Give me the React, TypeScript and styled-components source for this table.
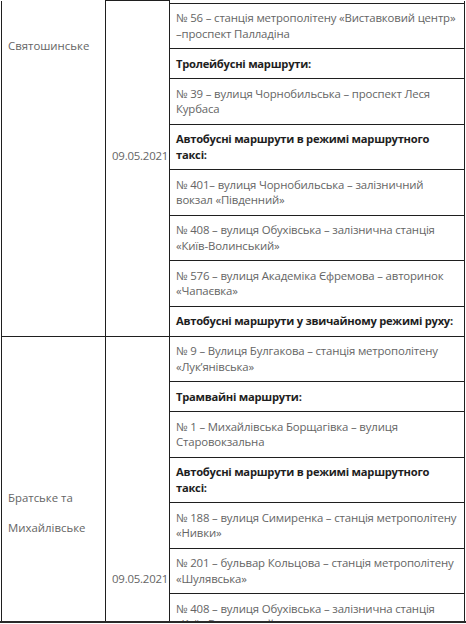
import React from "react";
import styled, { createGlobalStyle } from "styled-components";

const Global = createGlobalStyle`
  html, body { margin: 0; padding: 0; background: #fff; }
  body { overflow: hidden; }
`;

const Frame = styled.div`
  height: 621px;
  overflow: hidden;
  border-bottom: 2px solid #2a2a2a;
  background: #fff;
`;

const Table = styled.table`
  border-collapse: collapse;
  table-layout: fixed;
  width: 464px;
  margin-left: 1px;
  font-family: "Open Sans", "Noto Sans", sans-serif;
  font-size: 11.4px;
  line-height: 15.5px;
  color: #656565;
`;

const Cell = styled.td<{ $top?: number; $bold?: boolean }>`
  border: 1px solid #1f1f1f;
  padding: ${(p) => (p.$top !== undefined ? `${p.$top}px 6px 6px` : "6.75px 6px")};
  vertical-align: top;
  font-weight: ${(p) => (p.$bold ? 700 : 400)};
  font-size: ${(p) => (p.$bold ? "11.2px" : "11.4px")};
  letter-spacing: ${(p) => (p.$bold ? "-0.25px" : "-0.16px")};
  color: ${(p) => (p.$bold ? "#1e1e1e" : "#656565")};
`;

const TopCell = styled.td`
  border: 1px solid #1f1f1f;
  border-top: none;
  padding: 0;
  height: 2px;
`;

const SideCell = styled(Cell)`
  border-top: ${(p) => (p.$top !== undefined && p.$top < 40 ? "none" : "1px solid #1f1f1f")};
  letter-spacing: 0;
`;

const Line = styled.span`
  display: block;
  white-space: nowrap;
`;

const DateText = styled.span`
  white-space: nowrap;
  letter-spacing: -0.2px;
`;

const Para = styled.div<{ $gap?: number }>`
  & + & { margin-top: ${(p) => p.$gap ?? 0}px; }
`;

type Row = { lines: string[]; bold?: boolean };

const group1: Row[] = [
  { lines: ["№ 56 – станція метрополітену «Виставковий центр»", "–проспект Палладіна"] },
  { lines: ["Тролейбусні маршрути:"], bold: true },
  { lines: ["№ 39 – вулиця Чорнобильська – проспект Леся", "Курбаса"] },
  { lines: ["Автобусні маршрути в режимі маршрутного", "таксі:"], bold: true },
  { lines: ["№ 401– вулиця Чорнобильська – залізничний", "вокзал «Південний»"] },
  { lines: ["№ 408 – вулиця Обухівська – залізнична станція", "«Київ-Волинський»"] },
  { lines: ["№ 576 – вулиця Академіка Єфремова – авторинок", "«Чапаєвка»"] },
  { lines: ["Автобусні маршрути у звичайному режимі руху:"], bold: true },
];

const group2: Row[] = [
  { lines: ["№ 9 – Вулиця Булгакова – станція метрополітену", "«Лук’янівська»"] },
  { lines: ["Трамвайні маршрути:"], bold: true },
  { lines: ["№ 1 – Михайлівська Борщагівка – вулиця", "Старовокзальна"] },
  { lines: ["Автобусні маршрути в режимі маршрутного", "таксі:"], bold: true },
  { lines: ["№ 188 – вулиця Симиренка – станція метрополітену", "«Нивки»"] },
  { lines: ["№ 201 – бульвар Кольцова – станція метрополітену", "«Шулявська»"] },
  { lines: ["№ 408 – вулиця Обухівська – залізнична станція", "«Київ-Волинський»"] },
];

function RouteCell({ row }: { row: Row }) {
  return (
    <Cell $bold={row.bold}>
      {row.lines.map((l, i) => (
        <Line key={i}>{l}</Line>
      ))}
    </Cell>
  );
}

export default function App() {
  return (
    <Frame>
      <Global />
      <Table>
        <colgroup>
          <col style={{ width: 104 }} />
          <col style={{ width: 64 }} />
          <col />
        </colgroup>
        <tbody>
          <tr>
            <SideCell rowSpan={group1.length + 1} $top={37}>
              Святошинське
            </SideCell>
            <SideCell rowSpan={group1.length + 1} $top={147}>
              <DateText>09.05.2021</DateText>
            </SideCell>
            <TopCell />
          </tr>
          {group1.map((r, i) => (
            <tr key={"a" + i}>
              <RouteCell row={r} />
            </tr>
          ))}
          {group2.map((r, i) => (
            <tr key={"b" + i}>
              {i === 0 && (
                <>
                  <SideCell rowSpan={group2.length} $top={153}>
                    <Para $gap={14.5}>Братське та</Para>
                    <Para $gap={14.5}>Михайлівське</Para>
                  </SideCell>
                  <SideCell rowSpan={group2.length} $top={234}>
                    <DateText>09.05.2021</DateText>
                  </SideCell>
                </>
              )}
              <RouteCell row={r} />
            </tr>
          ))}
        </tbody>
      </Table>
    </Frame>
  );
}
